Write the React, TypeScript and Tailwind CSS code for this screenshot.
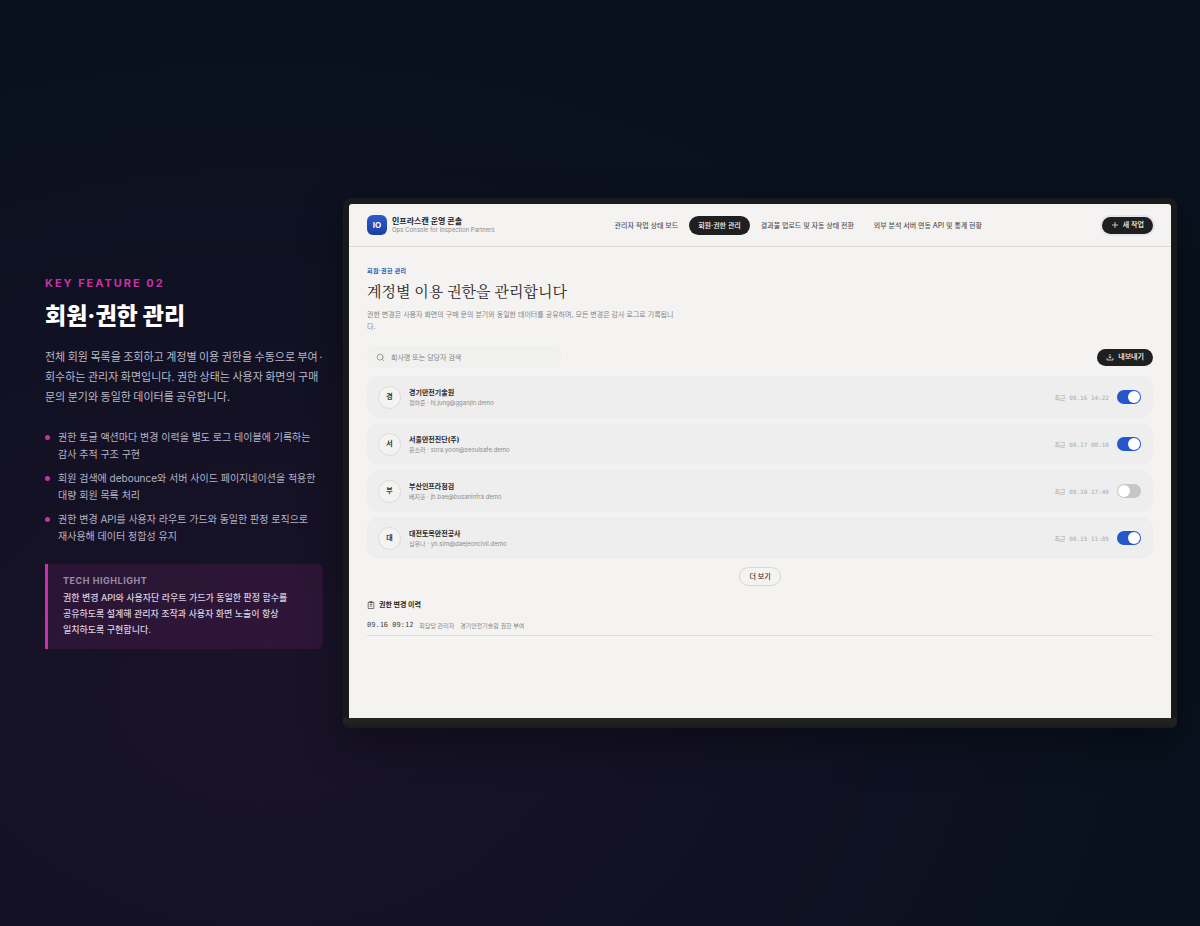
import { Search } from "lucide-react";

const points = [
  "권한 토글 액션마다 변경 이력을 별도 로그 테이블에 기록하는 감사 추적 구조 구현",
  "회원 검색에 debounce와 서버 사이드 페이지네이션을 적용한 대량 회원 목록 처리",
  "권한 변경 API를 사용자 라우트 가드와 동일한 판정 로직으로 재사용해 데이터 정합성 유지",
];

const navItems = [
  { label: "관리자 작업 상태 보드", active: false },
  { label: "회원·권한 관리", active: true },
  { label: "결과물 업로드 및 자동 상태 전환", active: false },
  { label: "외부 분석 서버 연동 API 및 통계 현황", active: false },
];

const members = [
  { initial: "경", name: "경기안전기술원", contact: "정하준 · hj.jung@gganjin.demo", last: "09.16 14:22", enabled: true },
  { initial: "서", name: "서울안전진단(주)", contact: "윤소라 · sora.yoon@seoulsafe.demo", last: "09.17 08:10", enabled: true },
  { initial: "부", name: "부산인프라점검", contact: "배지훈 · jh.bae@busaninfra.demo", last: "09.10 17:40", enabled: false },
  { initial: "대", name: "대전토목안전공사", contact: "심유나 · yn.sim@daejeoncivil.demo", last: "09.15 11:05", enabled: true },
];

function FeatureCopy() {
  return (
    <section className="break-keep">
      <p className="text-[11px] leading-3 font-bold tracking-[0.18em] text-[#c831a8]">KEY FEATURE 02</p>
      <h1 className="mt-[13px] text-[23px] leading-7 font-extrabold text-white">회원·권한 관리</h1>
      <p className="mt-4 -mr-2 font-['Noto_Sans_CJK_KR',sans-serif] text-[11px] leading-5 text-[#b9b9c8]">
        전체 회원 목록을 조회하고 계정별 이용 권한을 수동으로 부여·
        <br />
        회수하는 관리자 화면입니다. 권한 상태는 사용자 화면의 구매 문의 분기와 동일한 데이터를 공유합니다.
      </p>
      <ul className="mt-[23px] flex flex-col gap-[7px]">
        {points.map((point) => (
          <li key={point} className="flex gap-2 text-[10px] leading-[17px] text-[#b5b4c4]">
            <span className="mt-1.5 size-[5px] shrink-0 rounded-full bg-[#c831a8]" />
            <span>{point}</span>
          </li>
        ))}
      </ul>
      <aside className="mt-[19px] rounded-r-md border-l-[3px] border-[#c831a8] bg-[#c831a8]/12 pt-[9px] pr-4 pb-[11px] pl-[15px]">
        <h2 className="text-[9px] leading-[15px] font-bold tracking-[0.06em] text-[#9a8ba8]">TECH HIGHLIGHT</h2>
        <p className="mt-0.5 text-[9px] leading-4 font-medium text-[#d9cfe0]">
          권한 변경 API와 사용자단 라우트 가드가 동일한 판정 함수를 공유하도록 설계해 관리자 조작과 사용자 화면 노출이 항상 일치하도록 구현합니다.
        </p>
      </aside>
    </section>
  );
}

function ConsoleHeader() {
  return (
    <header className="flex h-[43px] shrink-0 items-center justify-between border-b border-[#d9d9d8] px-[18px]">
      <div className="flex items-center gap-[5px]">
        <span className="flex size-5 items-center justify-center rounded-md bg-linear-to-b from-[#2c5bcb] to-[#1b3fa0] font-['Inter',sans-serif] text-[8px] font-bold text-white">
          IO
        </span>
        <div>
          <p className="text-[8px] leading-[10px] font-bold text-[#222222]">인프라스캔 운영 콘솔</p>
          <p className="text-[6px] leading-2 text-[#8a8a8a]">Ops Console for Inspection Partners</p>
        </div>
      </div>
      <nav className="flex gap-0.5">
        {navItems.map((item) => (
          <a
            key={item.label}
            href="#"
            aria-current={item.active ? "page" : undefined}
            className={
              item.active
                ? "rounded-full bg-[#1f1f1f] px-[9px] text-[7px] leading-[19px] font-medium text-white"
                : "px-[9px] text-[7px] leading-[19px] font-medium text-[#555555]"
            }
          >
            {item.label}
          </a>
        ))}
      </nav>
      <button
        type="button"
        className="flex h-[17px] items-center gap-1 rounded-full bg-[#1f1f1f] px-[9px] text-[7px] font-medium text-white ring-2 ring-[#e3e4ee]"
      >
        <svg viewBox="0 0 8 8" className="size-2" fill="none" stroke="currentColor" strokeWidth="0.7" aria-hidden="true">
          <path d="M4 1v6M1 4h6" />
        </svg>
        새 작업
      </button>
    </header>
  );
}

function MemberRow({ member }: { member: (typeof members)[number] }) {
  return (
    <li className="flex h-[42px] items-center rounded-xl bg-[#eeeeee] pr-3 pl-[11px]">
      <span className="flex size-[23px] items-center justify-center rounded-full border border-[#dcdbda] bg-[#f4f3f2] text-[7px] font-bold text-[#333333]">
        {member.initial}
      </span>
      <div className="ml-2 grow">
        <p className="text-[7px] leading-[10px] font-bold text-[#262626]">{member.name}</p>
        <p className="text-[6px] leading-[9px] text-[#8c8c8c]">{member.contact}</p>
      </div>
      <time className="mr-2 font-['DejaVu_Sans_Mono','Noto_Sans_CJK_KR',monospace] text-[6px] text-[#a9a9a9]">
        최근 {member.last}
      </time>
      <input
        type="checkbox"
        role="switch"
        aria-label={`${member.name} 이용 권한`}
        defaultChecked={member.enabled}
        className="flex h-3.5 w-6 appearance-none items-center justify-start rounded-full bg-[#c6c6c6] px-px before:size-3 before:rounded-full before:bg-white checked:justify-end checked:bg-[#2456cc]"
      />
    </li>
  );
}

function ConsoleBody() {
  return (
    <main className="px-[18px] pt-5">
      <p className="text-[6px] leading-2 font-bold tracking-[0.06em] text-[#2f56b8]">회원·권한 관리</p>
      <h2 className="mt-1.5 font-['Noto_Serif_CJK_KR','Noto_Sans_CJK_KR',serif] text-[15px] leading-5 text-[#262626]">
        계정별 이용 권한을 관리합니다
      </h2>
      <p className="mt-2 max-w-[310px] text-[7px] leading-[12px] text-[#858585]">
        권한 변경은 사용자 화면의 구매 문의 분기와 동일한 데이터를 공유하며, 모든 변경은 감사 로그로 기록됩니다.
      </p>
      <div className="mt-[13px] flex items-center justify-between">
        <label className="flex h-[22px] w-[194px] items-center gap-1.5 rounded-lg bg-[#f0f0ef] px-[9px]">
          <Search className="size-[9px] shrink-0 text-[#858585]" strokeWidth={2} aria-hidden="true" />
          <input
            type="search"
            aria-label="회원 검색"
            placeholder="회사명 또는 담당자 검색"
            className="h-full w-full min-w-0 bg-transparent text-[7px] leading-[22px] text-[#333333] outline-none placeholder:text-[#858585]"
          />
        </label>
        <button
          type="button"
          className="flex h-[17px] items-center gap-1 rounded-full bg-[#1f1f1f] px-[9px] text-[7px] font-medium text-white"
        >
          <svg viewBox="0 0 8 8" className="size-2" fill="none" stroke="currentColor" strokeWidth="0.7" aria-hidden="true">
            <path d="M4 1v4M2.6 3.8 4 5.2l1.4-1.4M1 5v2h6V5" />
          </svg>
          내보내기
        </button>
      </div>
      <ul className="mt-2 flex flex-col gap-[5px]">
        {members.map((member) => (
          <MemberRow key={member.name} member={member} />
        ))}
      </ul>
      <div className="mt-2 flex justify-center">
        <button
          type="button"
          className="h-[19px] rounded-full border border-[#d8d7d6] px-[9px] text-[7px] leading-none font-medium text-[#333333]"
        >
          더 보기
        </button>
      </div>
      <section className="mt-3.5">
        <h3 className="flex items-center gap-1 text-[7px] leading-[10px] font-bold text-[#262626]">
          <svg viewBox="0 0 8 8" className="size-2" fill="none" stroke="#444444" strokeWidth="0.7" aria-hidden="true">
            <path d="M1.2 1.3h5.6v6.2H1.2zM2.8 0.6h2.4v1.3H2.8zM2.8 3.6h2.4M2.8 5.2h2.4" />
          </svg>
          권한 변경 이력
        </h3>
        <ul className="mt-1.5">
          <li className="flex h-5 items-center gap-1.5 border-b border-[#dddcdb] text-[6px] text-[#858585]">
            <time className="font-['DejaVu_Sans_Mono',monospace] text-[7px] text-[#444444]">09.16 09:12</time>
            <span>최담당 관리자</span>
            <span>경기안전기술원 권한 부여</span>
          </li>
        </ul>
      </section>
    </main>
  );
}

export default function App() {
  return (
    <div className="grid min-h-screen grid-cols-[minmax(0,1fr)_minmax(0,3fr)] items-center gap-5 bg-[#09111e] bg-[radial-gradient(ellipse_at_22%_75%,#191328_0%,#141125_30%,transparent_65%)] pr-[23px] pl-[45px] font-['Inter','Noto_Sans_CJK_KR',sans-serif]">
      <FeatureCopy />
      <div className="rounded-t-lg rounded-b-md shadow-[0_14px_40px_rgba(0,0,0,0.35)]">
        <div className="rounded-t-lg bg-[#191a1a] px-1.5 pt-1.5">
          <div className="flex aspect-[8/5] flex-col rounded-t-[3px] bg-[#f4f3f2]">
            <ConsoleHeader />
            <ConsoleBody />
          </div>
        </div>
        <div className="h-2.5 rounded-b-md bg-linear-to-b from-[#242525] to-[#1a1b1a]" />
      </div>
    </div>
  );
}
